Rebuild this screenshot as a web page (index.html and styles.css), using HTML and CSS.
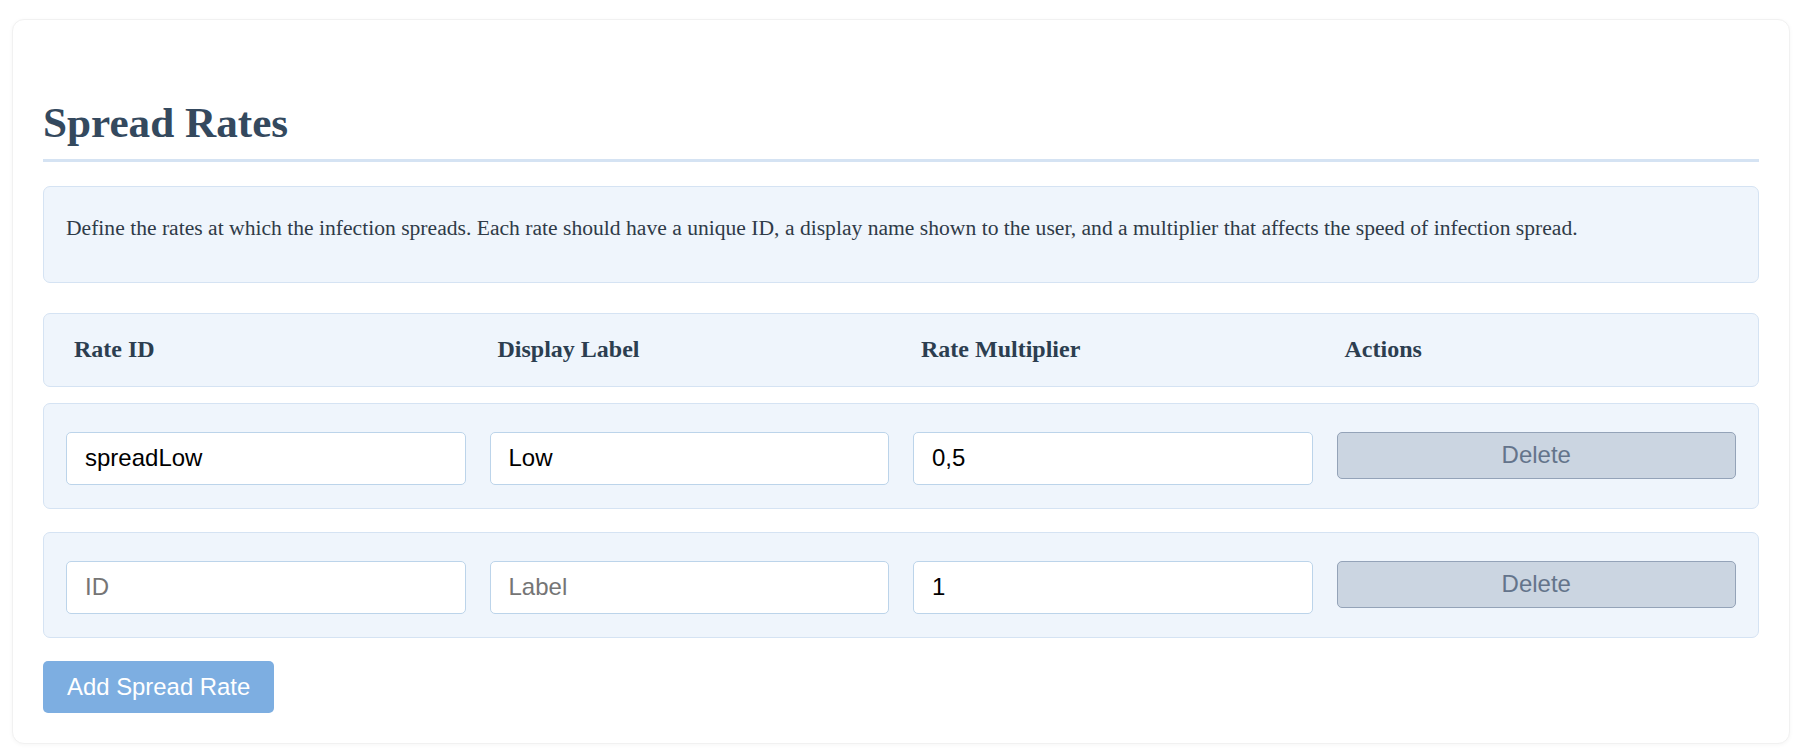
FILE: index.html
```html
<!DOCTYPE html>
<html lang="en">
<head>
<meta charset="utf-8">
<title>Spread Rates</title>
<link rel="stylesheet" href="styles.css">
</head>
<body>
<div class="card">
  <h2 class="title">Spread Rates</h2>
  <div class="info">
    <p>Define the rates at which the infection spreads. Each rate should have a unique ID, a display name shown to the user, and a multiplier that affects the speed of infection spread.</p>
  </div>
  <div class="table">
    <div class="row header">
      <div class="th">Rate ID</div>
      <div class="th">Display Label</div>
      <div class="th">Rate Multiplier</div>
      <div class="th">Actions</div>
    </div>
    <div class="row item">
      <input class="field" type="text" value="spreadLow" placeholder="ID">
      <input class="field" type="text" value="Low" placeholder="Label">
      <input class="field" type="text" value="0,5">
      <button class="delete" disabled>Delete</button>
    </div>
    <div class="row item">
      <input class="field" type="text" placeholder="ID">
      <input class="field" type="text" placeholder="Label">
      <input class="field" type="text" value="1">
      <button class="delete" disabled>Delete</button>
    </div>
  </div>
  <button class="add">Add Spread Rate</button>
</div>
</body>
</html>
```

FILE: styles.css
```css
html, body {
  margin: 0;
  padding: 0;
  background: #ffffff;
}

body {
  padding: 19px 13px 9px 12px;
  font-family: "Liberation Serif", "Times New Roman", serif;
}

.card {
  background: #ffffff;
  border: 1px solid #f1f1f1;
  border-radius: 12px;
  box-shadow: 0 1px 4px rgba(0, 0, 0, 0.04);
  padding: 30px;
}

.title {
  margin: 49px 0 24px 0;
  padding-bottom: 12px;
  border-bottom: 3px solid #d5e3f3;
  font-size: 43.2px;
  font-weight: bold;
  color: #34495e;
  line-height: 47.6px;
}

.info {
  background: #eff5fc;
  border: 1px solid #d5e3f3;
  border-radius: 7px;
  padding: 23px 21px 36px 22px;
}

.info p {
  margin: 0;
  font-size: 21.6px;
  line-height: 36.2px;
  color: #2f3b48;
}

.table {
  margin-top: 30.3px;
  display: flex;
  flex-direction: column;
}

.row {
  display: grid;
  grid-template-columns: repeat(4, 1fr);
  column-gap: 24px;
  background: #eff5fc;
  border: 1px solid #d5e3f3;
  border-radius: 7px;
}

.header {
  padding: 22px 22px;
  margin-bottom: 16px;
}

.th {
  padding-left: 8px;
  font-size: 24px;
  font-weight: bold;
  color: #2c3e50;
  line-height: 27.6px;
}

.item {
  padding: 28px 22px 23px 22px;
  margin-bottom: 23px;
  align-items: start;
}

.field {
  box-sizing: border-box;
  height: 53px;
  width: 100%;
  margin: 0;
  border: 1px solid #bcd4ea;
  border-radius: 5px;
  background: #ffffff;
  padding: 0 18px;
  font-family: "Liberation Sans", Arial, sans-serif;
  font-size: 24px;
  color: #000000;
  outline: none;
}

.field::placeholder {
  color: #757575;
}

.delete {
  box-sizing: border-box;
  height: 47px;
  width: 100%;
  margin: 0;
  border: 1px solid #94a3b8;
  border-radius: 5px;
  background: #cbd5e1;
  color: #64748b;
  font-family: "Liberation Sans", Arial, sans-serif;
  font-size: 24px;
  padding: 0;
}

.add {
  margin: 0;
  height: 52px;
  padding: 0 24px;
  border: none;
  border-radius: 5px;
  background: #7daee1;
  color: #ffffff;
  font-family: "Liberation Sans", Arial, sans-serif;
  font-size: 23.9px;
  display: block;
}
```
